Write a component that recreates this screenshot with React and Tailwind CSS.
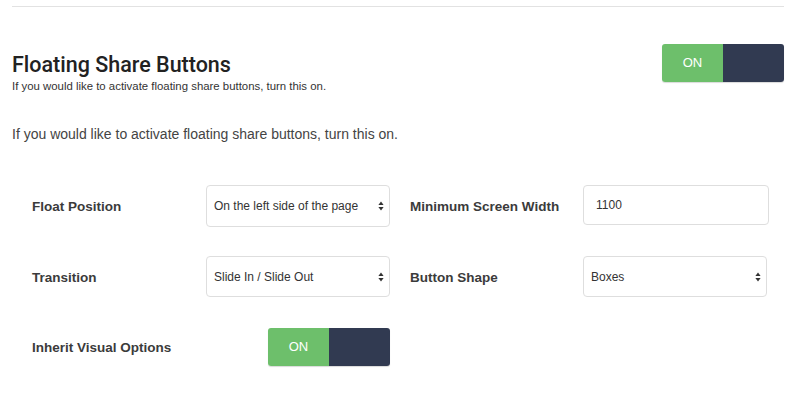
const Toggle = () => (
  <div className="flex h-[38px] w-[122px] overflow-hidden rounded-[3px] shadow-[0_1px_1px_rgba(0,0,0,0.15)]">
    <div className="flex w-[61px] items-center justify-center bg-[#6dbf6b] text-[13px] text-white">ON</div>
    <div className="flex-1 bg-[#313a51]" />
  </div>
);

const Arrows = () => (
  <svg width="6" height="10" viewBox="0 0 6 10" className="shrink-0">
    <path d="M3 0.5 L5.6 4 L0.4 4 Z" fill="#333" />
    <path d="M3 9.5 L5.6 6 L0.4 6 Z" fill="#333" />
  </svg>
);

const Select = ({ value }) => (
  <div className="flex h-full w-[184px] items-center justify-between rounded-[4px] border border-[#dedede] bg-white pl-[7px] pr-[5px] text-[12px] text-[#333]">
    <span>{value}</span>
    <Arrows />
  </div>
);

const Label = ({ children, className = "" }) => (
  <div className={`pt-[3px] text-[13.5px] font-bold text-[#3b3b3b] ${className}`}>{children}</div>
);

export default function App() {
  return (
    <div className="h-[398px] w-[800px] overflow-hidden bg-white pl-3 pr-4 font-['Liberation_Sans',Arial,sans-serif]">
      <div className="pt-[6px]">
        <div className="border-t border-[#e2e2e2]" />
      </div>

      <div className="mt-[37px] flex items-start justify-between">
        <div className="pt-[7px]">
          <h2 className="font-['Roboto',sans-serif] text-[21.5px] font-medium leading-[28px] text-[#222]">
            Floating Share Buttons
          </h2>
          <p className="text-[11.4px] leading-[14px] text-[#333]">
            If you would like to activate floating share buttons, turn this on.
          </p>
        </div>
        <Toggle />
      </div>

      <p className="mt-[31px] text-[14px] leading-5 text-[#444]">
        If you would like to activate floating share buttons, turn this on.
      </p>

      <div className="ml-5 mt-[41px]">
        <div className="flex h-[42px] items-center">
          <Label className="w-[174px]">Float Position</Label>
          <Select value="On the left side of the page" />
          <Label className="ml-5 w-[173px]">Minimum Screen Width</Label>
          <div className="flex h-[40px] w-[186px] items-center self-start rounded-[4px] border border-[#dedede] pl-[12px] text-[12px] text-[#333]">
            1100
          </div>
        </div>

        <div className="mt-[29px] flex h-[41px] items-center">
          <Label className="w-[174px]">Transition</Label>
          <Select value="Slide In / Slide Out" />
          <Label className="ml-5 w-[173px]">Button Shape</Label>
          <Select value="Boxes" />
        </div>

        <div className="mt-[31px] flex items-center">
          <Label className="w-[236px]">Inherit Visual Options</Label>
          <Toggle />
        </div>
      </div>
    </div>
  );
}
